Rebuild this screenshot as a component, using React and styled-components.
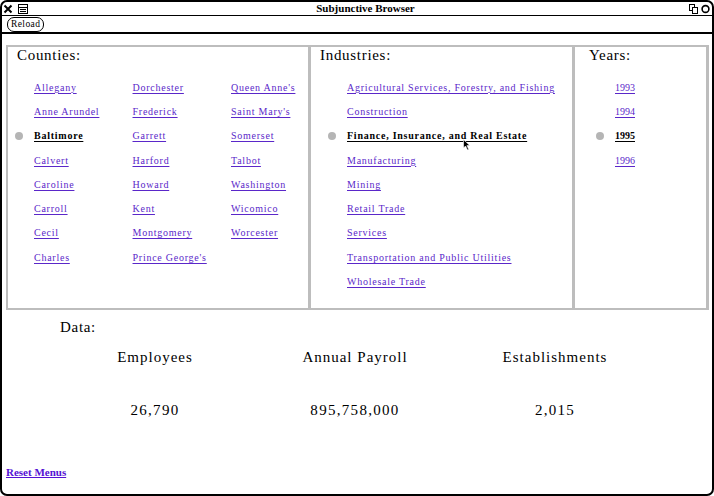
import React from "react";
import styled, { createGlobalStyle } from "styled-components";

const Global = createGlobalStyle`
  html, body { margin: 0; padding: 0; background: #fff; }
  body { font-family: "Liberation Serif", "Times New Roman", serif; }
`;

const Window = styled.div`
  width: 714px;
  height: 496px;
  box-sizing: border-box;
  border: 2px solid #000;
  border-radius: 7px;
  display: flex;
  flex-direction: column;
  overflow: hidden;
  background: #fff;
  position: relative;
`;

const TitleBar = styled.div`
  height: 13px;
  border-bottom: 1px solid #000;
  display: flex;
  align-items: center;
  padding: 0 2px 0 1px;
`;

const TitleText = styled.div`
  flex: 1;
  text-align: center;
  font-size: 11px;
  font-weight: bold;
  line-height: 13px;
  color: #000;
  padding-left: 14px;
`;

const TitleIcons = styled.div`
  display: flex;
  align-items: center;
  gap: 3px;
`;

const Toolbar = styled.div`
  height: 16px;
  border-bottom: 2px solid #000;
  display: flex;
  align-items: center;
  padding-left: 5px;
`;

const PillButton = styled.div`
  height: 13px;
  padding: 0 3px;
  border: 1px solid #000;
  border-radius: 7px;
  font-size: 9.5px;
  line-height: 13px;
  letter-spacing: 0.4px;
  color: #000;
`;

const Body = styled.div`
  flex: 1;
  display: flex;
  flex-direction: column;
  padding: 11px 3px 16px 4px;
`;

const FrameSet = styled.div`
  height: 265px;
  box-sizing: border-box;
  border: 2px solid #bdbdbd;
  border-right-width: 3px;
  display: grid;
  grid-template-columns: 300px 264px 1fr;
`;

const Frame = styled.div`
  box-sizing: border-box;
  border-left: ${(p) => (p.$first ? "0" : "3px solid #bdbdbd")};
  display: flex;
  flex-direction: column;
`;

const FrameTitle = styled.div`
  font-size: 15px;
  letter-spacing: 0.7px;
  line-height: 18px;
  color: #000;
  margin-left: ${(p) => p.$indent}px;
  margin-top: -1px;
`;

const ItemGrid = styled.div`
  margin-top: 11px;
  margin-left: ${(p) => p.$indent}px;
  display: grid;
  grid-auto-flow: column;
  grid-template-rows: repeat(${(p) => p.$rows}, 24.3px);
  grid-template-columns: repeat(${(p) => p.$cols}, 98.5px);
`;

const Item = styled.div`
  display: flex;
  align-items: center;
  gap: 11px;
  white-space: nowrap;
`;

const Bullet = styled.span`
  width: 8px;
  height: 8px;
  border-radius: 50%;
  flex: none;
  background: ${(p) => (p.$on ? "#b5b5b5" : "transparent")};
  margin-top: 1px;
`;

const Link = styled.a`
  font-size: 10px;
  letter-spacing: ${(p) => (p.$tight ? "0px" : "0.75px")};
  color: ${(p) => (p.$on ? "#000" : "#5a27c9")};
  font-weight: ${(p) => (p.$on ? "bold" : "normal")};
  text-decoration: underline;
  text-underline-offset: 2px;
  cursor: pointer;
`;

const Cursor = styled.svg`
  position: absolute;
  left: 461px;
  top: 137px;
`;

const DataLabel = styled.div`
  font-size: 15px;
  letter-spacing: 0.7px;
  line-height: 18px;
  margin: 8px 0 0 54px;
  color: #000;
`;

const DataGrid = styled.div`
  margin: 12px 0 0 49px;
  display: grid;
  grid-template-columns: repeat(3, 200px);
  row-gap: 35px;
`;

const Cell = styled.div`
  text-align: center;
  font-size: 15px;
  letter-spacing: ${(p) => (p.$num ? "1.3px" : "1px")};
  line-height: 18px;
  color: #000;
`;

const ResetLink = styled.a`
  margin-top: auto;
  font-size: 11px;
  font-weight: bold;
  line-height: 12px;
  color: #5511d4;
  text-decoration: underline;
  align-self: flex-start;
  cursor: pointer;
`;

const counties = [
  "Allegany", "Anne Arundel", "Baltimore", "Calvert", "Caroline", "Carroll", "Cecil", "Charles",
  "Dorchester", "Frederick", "Garrett", "Harford", "Howard", "Kent", "Montgomery", "Prince George's",
  "Queen Anne's", "Saint Mary's", "Somerset", "Talbot", "Washington", "Wicomico", "Worcester",
];

const industries = [
  "Agricultural Services, Forestry, and Fishing",
  "Construction",
  "Finance, Insurance, and Real Estate",
  "Manufacturing",
  "Mining",
  "Retail Trade",
  "Services",
  "Transportation and Public Utilities",
  "Wholesale Trade",
];

const years = ["1993", "1994", "1995", "1996"];

function List({ items, selected, rows, cols, indent, tight }) {
  return (
    <ItemGrid $rows={rows} $cols={cols} $indent={indent}>
      {items.map((t) => (
        <Item key={t}>
          <Bullet $on={t === selected} />
          <Link $on={t === selected} $tight={tight}>{t}</Link>
        </Item>
      ))}
    </ItemGrid>
  );
}

export default function App() {
  return (
    <>
      <Global />
      <Window>
        <TitleBar>
          <TitleIcons>
            <svg width="10" height="10" viewBox="0 0 10 10">
              <path d="M1.5 1.5 L8.5 8.5 M8.5 1.5 L1.5 8.5" stroke="#000" strokeWidth="2" />
            </svg>
            <svg width="10" height="10" viewBox="0 0 10 10" style={{ marginLeft: 2 }}>
              <rect x="0.5" y="0.5" width="9" height="9" fill="none" stroke="#000" />
              <path d="M0.5 3.5 H9.5 M2 5.5 H8 M2 7.5 H8" stroke="#000" strokeWidth="1" />
            </svg>
          </TitleIcons>
          <TitleText>Subjunctive Browser</TitleText>
          <TitleIcons>
            <svg width="9" height="10" viewBox="0 0 9 10">
              <rect x="0.5" y="0.5" width="5" height="6" fill="#fff" stroke="#000" />
              <rect x="3.5" y="3.5" width="5" height="6" fill="#fff" stroke="#000" />
            </svg>
            <svg width="9" height="10" viewBox="0 0 9 10">
              <circle cx="4.5" cy="5" r="3.4" fill="none" stroke="#000" strokeWidth="1.6" />
            </svg>
          </TitleIcons>
        </TitleBar>
        <Toolbar>
          <PillButton>Reload</PillButton>
        </Toolbar>
        <Body>
          <FrameSet>
            <Frame $first>
              <FrameTitle $indent={9}>Counties:</FrameTitle>
              <List items={counties} selected="Baltimore" rows={8} cols={3} indent={7} />
            </Frame>
            <Frame>
              <FrameTitle $indent={9}>Industries:</FrameTitle>
              <List items={industries} selected="Finance, Insurance, and Real Estate" rows={9} cols={1} indent={17} />
            </Frame>
            <Frame>
              <FrameTitle $indent={14}>Years:</FrameTitle>
              <List items={years} selected="1995" rows={4} cols={1} indent={21} tight />
            </Frame>
          </FrameSet>
          <DataLabel>Data:</DataLabel>
          <DataGrid>
            <Cell>Employees</Cell>
            <Cell>Annual Payroll</Cell>
            <Cell>Establishments</Cell>
            <Cell $num>26,790</Cell>
            <Cell $num>895,758,000</Cell>
            <Cell $num>2,015</Cell>
          </DataGrid>
          <ResetLink>Reset Menus</ResetLink>
        </Body>
        <Cursor width="8" height="12" viewBox="0 0 8 12">
          <path d="M0.5 0.5 L0.5 9 L2.5 7 L4.5 11 L5.8 10.4 L3.9 6.6 L6.8 6.6 Z" fill="#000" stroke="#fff" strokeWidth="0.6" />
        </Cursor>
      </Window>
    </>
  );
}
